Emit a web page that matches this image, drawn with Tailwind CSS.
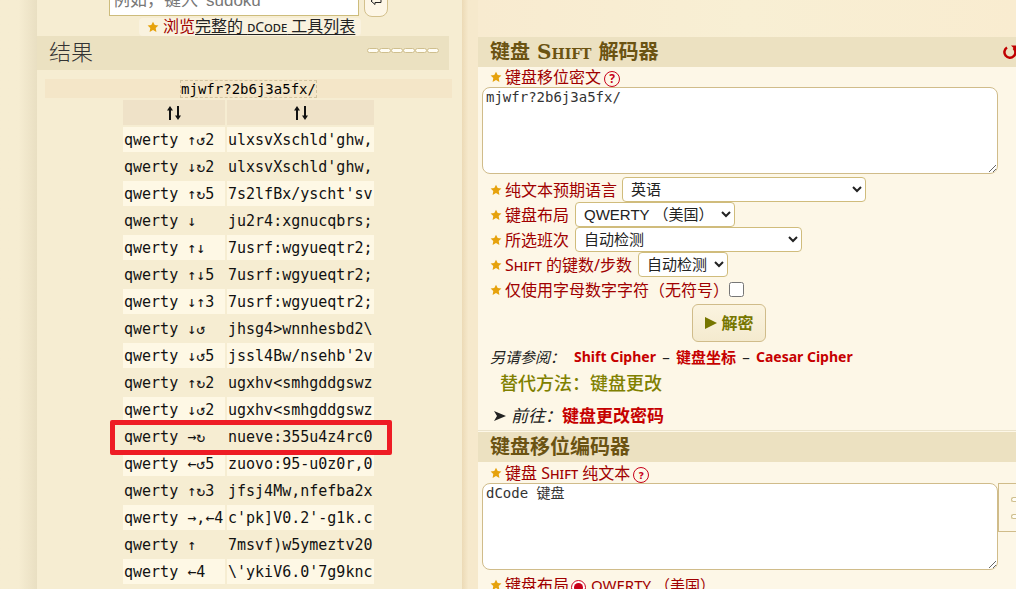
<!DOCTYPE html>
<html lang="zh-CN">
<head>
<meta charset="utf-8">
<meta name="viewport" content="width=device-width, initial-scale=1">
<title>键盘 Shift 解码器</title>
<script src="https://cdn.jsdelivr.net/npm/@tailwindcss/browser@4"></script>
</head>
<body class="h-screen overflow-hidden bg-[#f6edd2] font-['Noto_Sans','Noto_Sans_CJK_SC',sans-serif] text-base leading-5 text-[#222]">
<svg class="hidden" aria-hidden="true">
  <symbol id="star" viewBox="0 0 12 12"><path d="M6 .7 7.700 4l3.700.5-2.700 2.600.7 3.800L6 9.100 2.600 10.900l.7-3.800L.6 4.500 4.300 4z" fill="#e6a20c"/></symbol>
</svg>
<div class="flex min-h-full">
  <div class="w-[37px] shrink-0 bg-linear-to-r from-[#f6edd2] from-50% to-[#e9dfc2]"></div>

  <aside class="w-[425px] shrink-0 bg-[#f6edd2]">
    <form class="-mt-[15px] flex h-[33px] items-start pl-[72px]">
      <input aria-label="搜索工具" placeholder="例如，键入 'sudoku'" class="h-[31px] w-[250px] border border-[#cdbc7c] bg-white px-[3px] font-['Liberation_Sans','Noto_Sans_CJK_SC',sans-serif] text-[17px] placeholder:text-[#777]">
      <button type="button" aria-label="搜索" class="ml-[5px] flex h-8 w-6 items-center justify-center rounded-lg border border-[#d3c08c] bg-[#fdf6e6]">
        <svg viewBox="0 0 12 12" class="h-3 w-3" fill="none" stroke="#222"><path d="M1 6 5 2.500v2h6v3H5v2z"/></svg>
      </button>
    </form>
    <div class="ml-[102px] flex h-[18px] w-[222px] items-center rounded bg-[#f9f2df] pl-2 [font-variant:small-caps]">
      <svg class="mr-1 h-3 w-3"><use href="#star"/></svg>
      <a href="#" class="whitespace-nowrap leading-[18px]"><span class="text-[#a00000]">浏览</span><span class="underline decoration-1 underline-offset-2">完整的 <span class="text-sm">dCode</span> 工具列表</span></a>
    </div>

    <div class="mr-[13px] flex h-[34px] items-center justify-between bg-[#ebe1c1] pr-[10px] pl-3">
      <h2 class="-mt-1 text-[22px] font-light text-[#333]">结果</h2>
      <div class="-mt-[6px] flex" aria-hidden="true">
        <i class="h-[5px] w-3 rounded-sm border border-[#cfbf8e] bg-[#fffdf5]"></i><i class="h-[5px] w-3 rounded-sm border border-[#cfbf8e] bg-[#fffdf5]"></i><i class="h-[5px] w-3 rounded-sm border border-[#cfbf8e] bg-[#fffdf5]"></i><i class="h-[5px] w-3 rounded-sm border border-[#cfbf8e] bg-[#fffdf5]"></i><i class="h-[5px] w-3 rounded-sm border border-[#cfbf8e] bg-[#fffdf5]"></i><i class="h-[5px] w-3 rounded-sm border border-[#cfbf8e] bg-[#fffdf5]"></i>
      </div>
    </div>

    <div class="mt-[9px] mr-[10px] ml-2 flex h-[19px] items-center justify-center bg-[#f4e6c8] font-['DejaVu_Sans_Mono',monospace] text-sm text-black">
      <span class="border border-dashed border-[#d3c5a2] leading-4">mjwfr?2b6j3a5fx/</span>
    </div>

    <table class="ml-[84px] table-fixed border-separate border-spacing-[2px] font-['DejaVu_Sans_Mono',monospace] text-[15px] whitespace-pre text-[#111]">
      <thead>
        <tr class="h-[25px] bg-[#efe2c8]">
          <th class="w-[102px] p-0"><button type="button" aria-label="按布局排序" class="inline-flex align-middle"><svg viewBox="0 0 18 14" class="h-[14px] w-[18px]" fill="none" stroke="#111" stroke-width="2"><path d="M5 14V3M13 0v11"/><path d="M5 0 2 4.500h6zM13 14l-3-4.500h6z" fill="#111" stroke="none"/></svg></button></th>
          <th class="w-[147px] p-0"><button type="button" aria-label="按结果排序" class="inline-flex align-middle"><svg viewBox="0 0 18 14" class="h-[14px] w-[18px]" fill="none" stroke="#111" stroke-width="2"><path d="M5 14V3M13 0v11"/><path d="M5 0 2 4.500h6zM13 14l-3-4.500h6z" fill="#111" stroke="none"/></svg></button></th>
        </tr>
      </thead>
      <tbody class="[&>tr]:h-[25px] [&>tr:nth-child(odd)>td]:bg-[#fef8e5] [&_td]:px-px [&_td]:py-0">
        <tr><td>qwerty ↑↺2</td><td>ulxsvXschld'ghw,</td></tr>
        <tr><td>qwerty ↓↻2</td><td>ulxsvXschld'ghw,</td></tr>
        <tr><td>qwerty ↑↻5</td><td>7s2lfBx/yscht'sv</td></tr>
        <tr><td>qwerty ↓</td><td>ju2r4:xgnucqbrs;</td></tr>
        <tr><td>qwerty ↑↓</td><td>7usrf:wgyueqtr2;</td></tr>
        <tr><td>qwerty ↑↓5</td><td>7usrf:wgyueqtr2;</td></tr>
        <tr><td>qwerty ↓↑3</td><td>7usrf:wgyueqtr2;</td></tr>
        <tr><td>qwerty ↓↺</td><td>jhsg4&gt;wnnhesbd2\</td></tr>
        <tr><td>qwerty ↓↺5</td><td>jssl4Bw/nsehb'2v</td></tr>
        <tr><td>qwerty ↑↻2</td><td>ugxhv&lt;smhgddgswz</td></tr>
        <tr><td>qwerty ↓↺2</td><td>ugxhv&lt;smhgddgswz</td></tr>
        <tr><td class="relative">qwerty →↻<span class="absolute -top-1 -left-[13px] h-[35px] w-[282px] rounded-xs border-5 border-[#ee1c24]"></span></td><td>nueve:355u4z4rc0</td></tr>
        <tr><td>qwerty ←↺5</td><td>zuovo:95-u0z0r,0</td></tr>
        <tr><td>qwerty ↑↻3</td><td>jfsj4Mw,nfefba2x</td></tr>
        <tr><td>qwerty →,←4</td><td>c'pk]V0.2'-g1k.c</td></tr>
        <tr><td>qwerty ↑</td><td>7msvf)w5ymeztv20</td></tr>
        <tr><td>qwerty ←4</td><td>\'ykiV6.0'7g9knc</td></tr>
      </tbody>
    </table>
  </aside>

  <div class="w-4 shrink-0 bg-linear-to-r from-[#ecdab6] to-[#f6e9cc] to-40%"></div>

  <main class="min-w-0 flex-1 bg-[#fdf7e7]">
    <div class="h-[37px] bg-linear-to-r from-[#f8ebd0] via-[#f8efd4] to-[#f9ecd0]"></div>

    <section class="border-b border-[#ebe3cc]">
      <div class="flex h-[30px] items-center justify-between bg-[#ece1c1] pl-3">
        <h2 class="font-['DejaVu_Serif','Noto_Sans_CJK_SC',serif] text-xl font-bold whitespace-nowrap text-[#6b5312] [font-variant:small-caps]">键盘 Shift 解码器</h2>
        <button type="button" aria-label="重置" class="-mr-[2px]"><svg viewBox="0 0 16 16" class="h-4 w-4" fill="none" stroke="#c00000" stroke-width="2.500"><path d="M5 3.500A5.500 5.500 0 1 0 11.500 4"/><path d="M9 1.500h6V7.500z" fill="#c00000" stroke="none"/></svg></button>
      </div>

      <div class="flex h-5 items-center pl-3 text-[#a00000]">
        <svg class="mr-[3px] h-3 w-3"><use href="#star"/></svg>
        <label for="cipher">键盘移位密文</label>
        <button type="button" aria-label="帮助" class="mt-1 ml-[3px] h-4 w-4 rounded-full border border-[#c8001a] text-xs leading-3 font-bold text-[#c8001a]">?</button>
      </div>
      <div class="pr-[18px] pl-1">
        <textarea id="cipher" class="block h-[87px] w-full rounded-lg border border-[#d0bc8a] bg-white px-[3px] py-px font-['DejaVu_Sans_Mono','Noto_Sans_CJK_SC',monospace] text-sm leading-4 text-[#333]">mjwfr?2b6j3a5fx/</textarea>
      </div>

      <div class="mt-[3px] pl-3 text-[#a00000] [font-variant:small-caps] [&>div]:flex [&>div]:h-[25px] [&>div]:items-center [&_select]:h-[25px] [&_select]:rounded [&_select]:border [&_select]:border-[#d0bc7c] [&_select]:bg-white [&_select]:pl-1 [&_select]:font-['Liberation_Sans','Noto_Sans_CJK_SC',sans-serif] [&_select]:text-[15px] [&_select]:text-[#222] [&_select]:[font-variant:normal] [&_svg]:mr-[3px] [&_svg]:h-3 [&_svg]:w-3">
        <div><svg><use href="#star"/></svg><label for="lang">纯文本预期语言</label><select id="lang" class="ml-[5px] w-[244px]"><option>英语</option></select></div>
        <div><svg><use href="#star"/></svg><label for="layout">键盘布局</label><select id="layout" class="ml-[6px] w-[160px]"><option>QWERTY （美国）</option></select></div>
        <div><svg><use href="#star"/></svg><label for="shift">所选班次</label><select id="shift" class="ml-[6px] w-[227px]"><option>自动检测</option></select></div>
        <div><svg><use href="#star"/></svg><label for="steps">Shift 的键数/步数</label><select id="steps" class="ml-[6px] w-[90px]"><option>自动检测</option></select></div>
        <div><svg><use href="#star"/></svg><label for="alnum">仅使用字母数字字符（无符号）</label><input id="alnum" type="checkbox" class="h-[15px] w-[15px]"></div>
      </div>

      <div class="mt-[2px] flex justify-center pr-[18px] pl-1">
        <button type="button" class="mr-[22px] flex h-[38px] w-[74px] items-center justify-center gap-1 rounded-md border border-[#d0bc8a] bg-linear-to-b from-[#fbf4e0] to-[#f4eace] font-bold text-[#767600]"><svg viewBox="0 0 13 14" class="h-[14px] w-[13px]" fill="#767600"><path d="M1 1v12L13 7z"/></svg>解密</button>
      </div>

      <p class="mt-1 flex h-[22px] items-center gap-[5px] pl-3 text-[15px] whitespace-nowrap"><i class="mr-1">另请参阅：</i><a href="#" class="text-sm font-bold text-[#c60000]">Shift Cipher</a><span class="w-[10px] text-center">–</span><a href="#" class="font-bold text-[#c60000]">键盘坐标</a><span class="w-[10px] text-center">–</span><a href="#" class="text-sm font-bold text-[#c60000]">Caesar Cipher</a></p>
      <h3 class="flex h-[30px] items-center pl-[22px] text-lg font-medium text-[#808000]">替代方法：键盘更改</h3>
      <p class="mt-1 flex h-7 items-center pl-4 text-[17px]"><svg viewBox="0 0 12 12" class="mr-[5px] h-3 w-3" fill="#222"><path d="M0 1 12 6 0 11 3 6z"/></svg><i>前往：</i><a href="#" class="font-bold text-[#c60000]">键盘更改密码</a></p>
    </section>

    <section class="mt-px">
      <div class="flex h-[30px] items-center bg-[#ece1c1] pl-3">
        <h2 class="font-['DejaVu_Serif','Noto_Sans_CJK_SC',serif] text-xl font-bold text-[#6b5312]">键盘移位编码器</h2>
      </div>
      <div class="flex h-[21px] items-center pl-3 text-[#a00000] [font-variant:small-caps]">
        <svg class="mr-[3px] h-3 w-3"><use href="#star"/></svg>
        <label for="plain">键盘 Shift 纯文本</label>
        <button type="button" aria-label="帮助" class="mt-1 ml-[3px] h-4 w-4 rounded-full border border-[#c8001a] text-xs leading-3 font-bold text-[#c8001a]">?</button>
      </div>
      <div class="relative pr-[18px] pl-1">
        <textarea id="plain" class="block h-[87px] w-full rounded-lg border border-[#d0bc8a] bg-white px-[3px] py-px font-['DejaVu_Sans_Mono','Noto_Sans_CJK_SC',monospace] text-sm leading-4 text-[#333]">dCode 键盘</textarea>
        <div class="absolute top-0 right-0 flex h-[49px] w-[18px] flex-col items-end justify-center gap-3 overflow-hidden border border-r-0 border-[#d0bc8a] bg-[#fdf7e7]" aria-hidden="true">
          <i class="h-[5px] w-[5px] rounded-l-sm border border-r-0 border-[#cfbf8e] bg-[#fffdf5]"></i>
          <i class="h-[5px] w-[5px] rounded-l-sm border border-r-0 border-[#cfbf8e] bg-[#fffdf5]"></i>
        </div>
      </div>
      <div role="radiogroup" aria-labelledby="kb-label" class="mt-1 flex h-[22px] items-center pl-3 text-[#a00000]">
        <svg class="mr-[3px] h-3 w-3"><use href="#star"/></svg>
        <span id="kb-label">键盘布局</span>
        <input id="qw" type="radio" name="kb" checked class="mt-1 mr-[5px] ml-[2px] h-[15px] w-[15px] accent-[#c8001a]">
        <label for="qw" class="text-[15px]">QWERTY （美国）</label>
      </div>
    </section>
  </main>
</div>
</body>
</html>
